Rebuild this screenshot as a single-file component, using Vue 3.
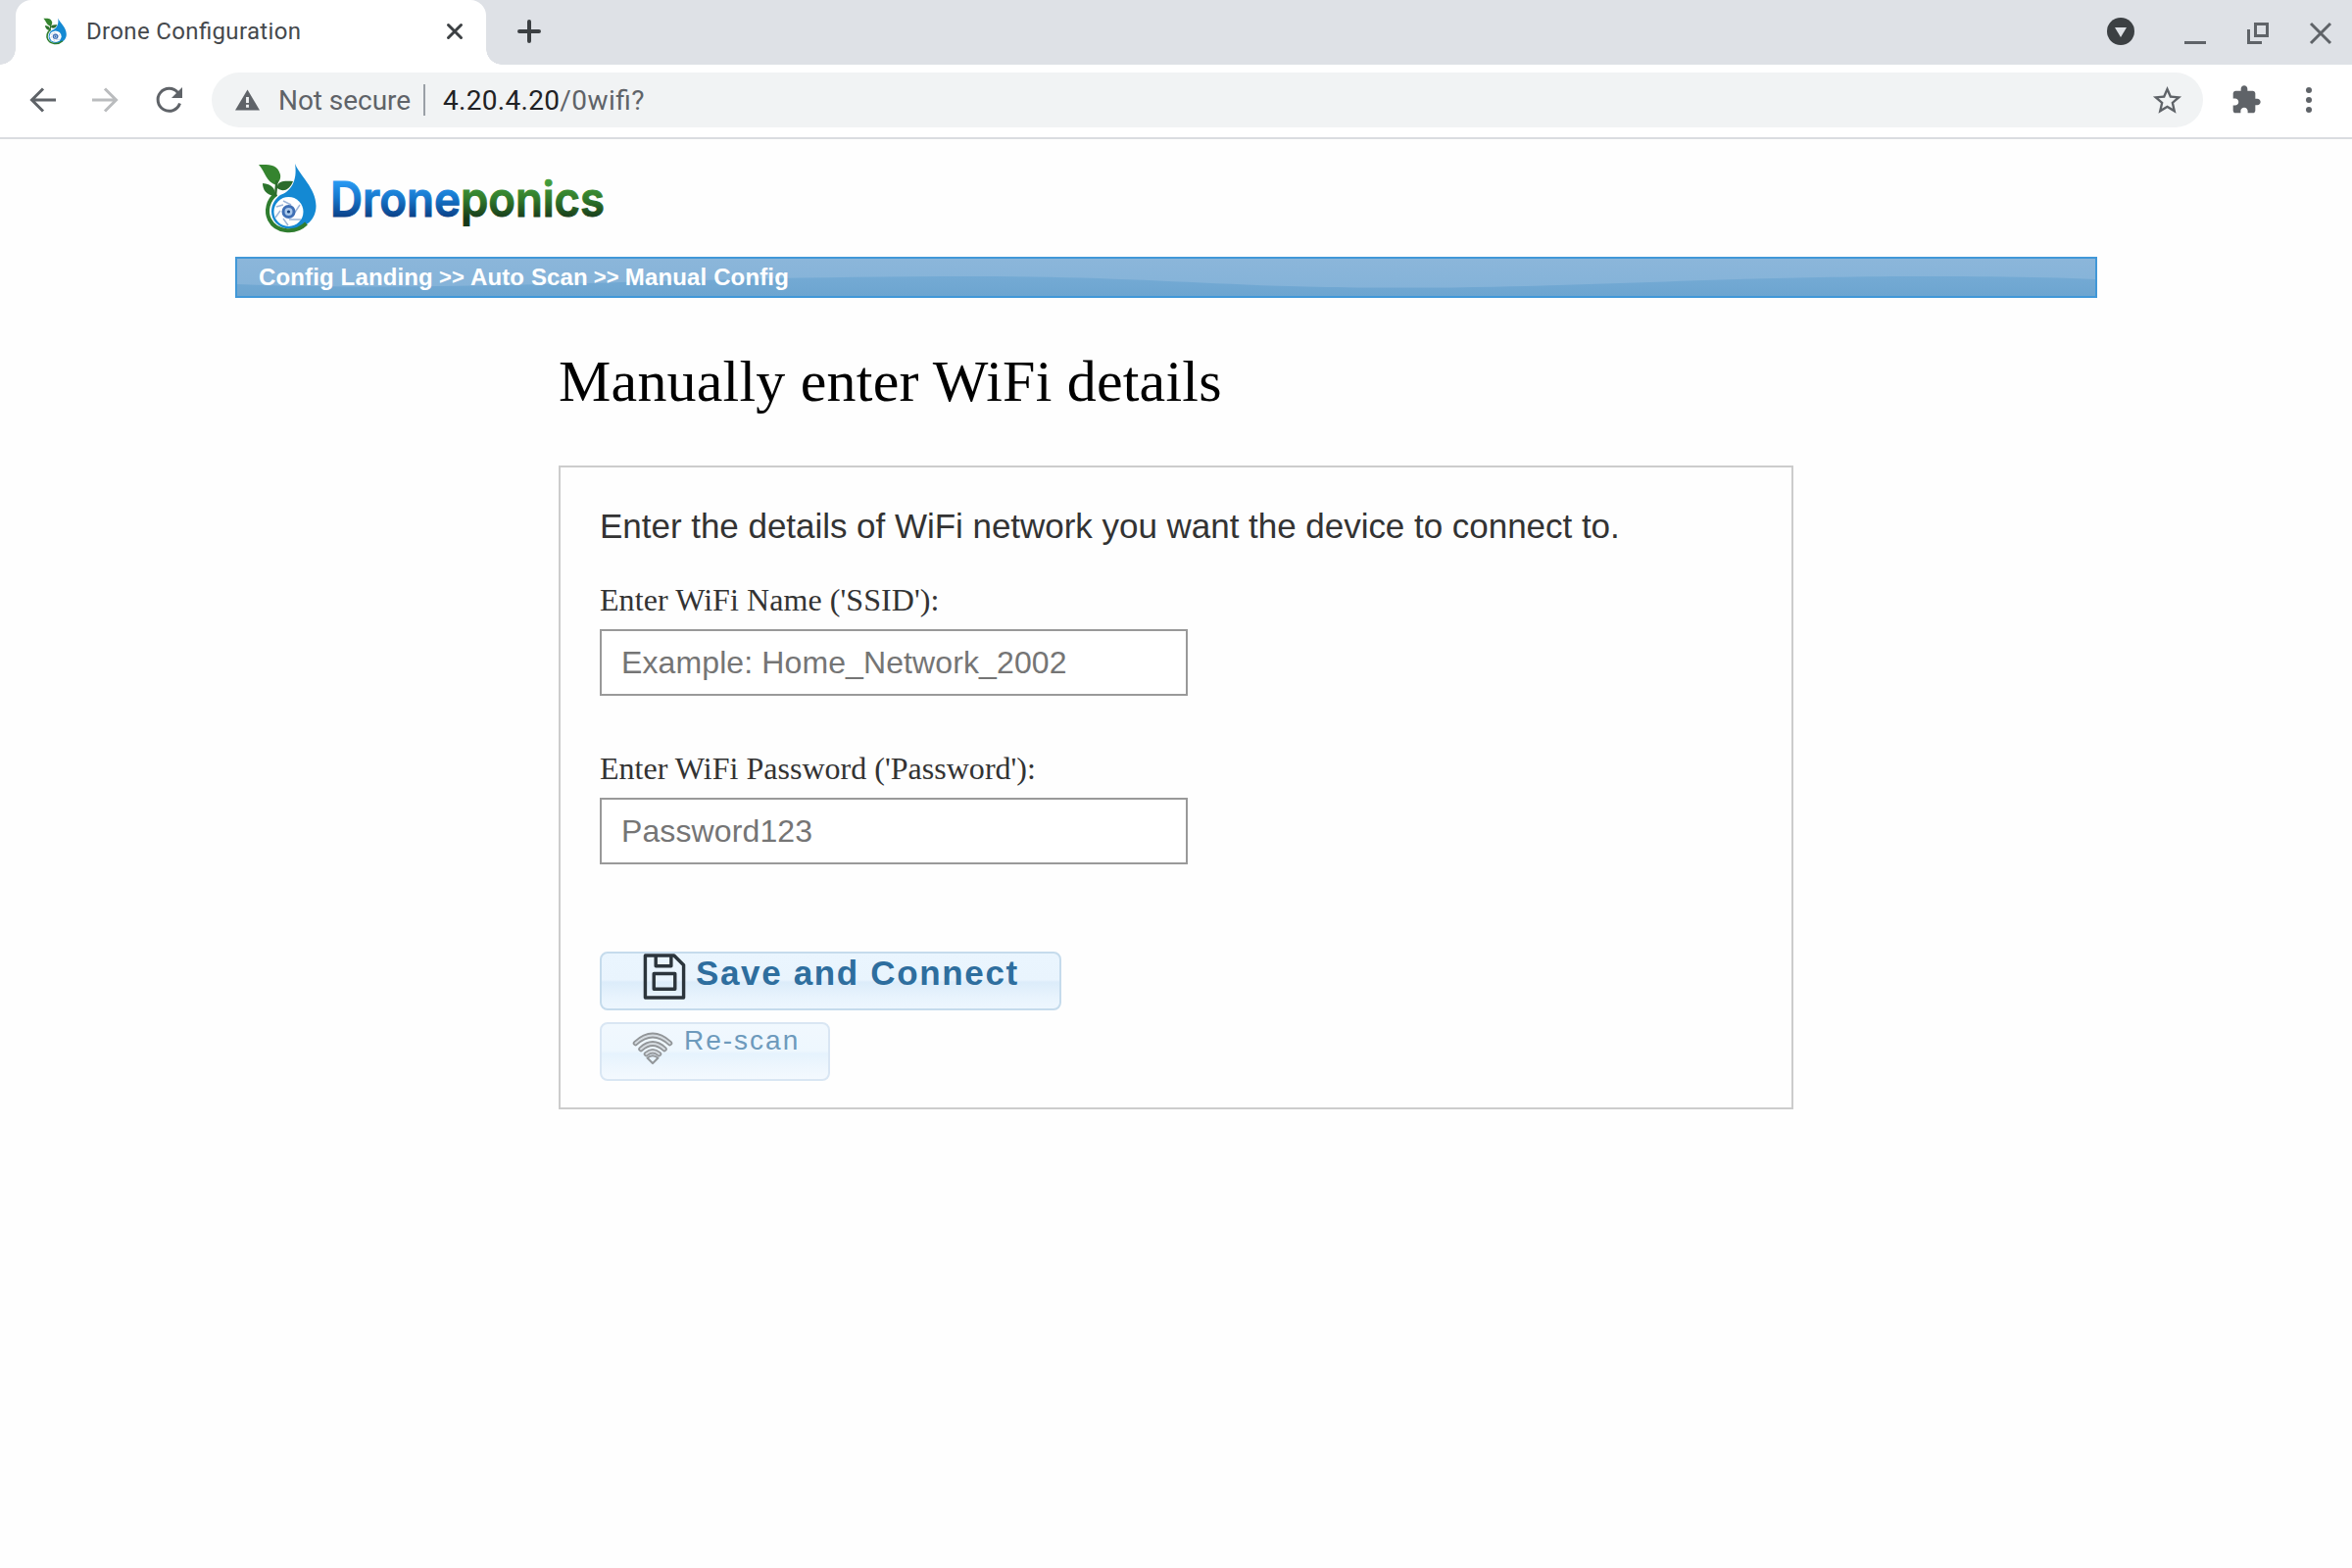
<script setup>
const crumbs = ['Config Landing', 'Auto Scan', 'Manual Config']
</script>

<template>
  <div class="window">
    <header class="strip">
      <div class="tab">
        <svg class="favicon" viewBox="43 24 60 73" preserveAspectRatio="none"><use href="#mark" /></svg>
        <span class="tab-title">Drone Configuration</span>
        <svg class="tab-close" viewBox="0 0 16 16"><path d="M1.5 1.5 14.5 14.5M14.5 1.5 1.5 14.5" /></svg>
      </div>
      <svg class="new-tab" viewBox="0 0 24 24"><path d="M12 2V22M2 12H22" /></svg>
      <div class="controls">
        <svg class="c-down" viewBox="0 0 28 28"><circle cx="14" cy="14" r="14" /><path d="M8 10h12l-6 10z" /></svg>
        <svg class="c-min" viewBox="0 0 22 22"><path d="M0 20.500H22" /></svg>
        <svg class="c-max" viewBox="0 0 22 22"><path d="M8.500 1.500H20.500V13.500H8.500zM1.500 7V20.500H15" /></svg>
        <svg class="c-close" viewBox="0 0 22 22"><path d="M1 1 21 21M21 1 1 21" /></svg>
      </div>
    </header>

    <div class="toolbar">
      <svg class="nav back" viewBox="0 0 28 28"><path d="M27 14H3M14 2.500 2.500 14 14 25.500" /></svg>
      <svg class="nav fwd" viewBox="0 0 28 28"><path d="M1 14H25M14 2.500 25.500 14 14 25.500" /></svg>
      <svg class="nav reload" viewBox="0 0 28 28"><path d="M24.500 17.500A11.500 11.500 0 1 1 22.500 6.500" /><path class="solid" d="M27 1V12H16z" /></svg>
      <div class="omnibox">
        <svg class="warn" viewBox="0 0 26 22"><path d="M13 0 26 22H0z" /><path class="bang" d="M13 8V14M13 16V19" /></svg>
        <span class="insecure">Not secure</span>
        <i class="sep"></i>
        <span class="url"><b>4.20.4.20</b>/0wifi?</span>
        <svg class="star" viewBox="0 0 24 24"><path d="M22 9.240l-7.190-.620L12 2 9.190 8.630 2 9.240l5.460 4.730L5.820 21 12 17.270 18.180 21l-1.630-7.030L22 9.240zM12 15.400l-3.760 2.270 1-4.280-3.320-2.880 4.380-.380L12 6.100l1.710 4.040 4.380.380-3.320 2.880 1 4.280L12 15.400z" /></svg>
      </div>
      <svg class="puzzle" viewBox="0 0 24 24"><path d="M20.500 11H19V7c0-1.100-.900-2-2-2h-4V3.500C13 2.120 11.880 1 10.500 1S8 2.120 8 3.500V5H4c-1.100 0-1.990.900-1.990 2v3.800H3.500c1.490 0 2.700 1.210 2.700 2.700s-1.210 2.700-2.700 2.700H2V20c0 1.100.900 2 2 2h3.800v-1.500c0-1.490 1.210-2.700 2.700-2.700 1.490 0 2.700 1.210 2.700 2.700V22H17c1.100 0 2-.900 2-2v-4h1.500c1.380 0 2.500-1.120 2.500-2.500S21.880 11 20.500 11z" /></svg>
      <svg class="dots" viewBox="0 0 6 26"><circle cx="3" cy="3" r="3" /><circle cx="3" cy="13" r="3" /><circle cx="3" cy="23" r="3" /></svg>
    </div>

    <main>
      <svg class="logo" viewBox="0 0 380 120" role="img" aria-label="Droneponics">
        <defs>
          <linearGradient id="blue" gradientUnits="userSpaceOnUse" x1="0" y1="42" x2="0" y2="80"><stop offset="0" stop-color="#2b9cf5" /><stop offset=".45" stop-color="#1779ce" /><stop offset="1" stop-color="#0a3f86" /></linearGradient>
          <linearGradient id="green" gradientUnits="userSpaceOnUse" x1="0" y1="42" x2="0" y2="88"><stop offset="0" stop-color="#46a03c" /><stop offset=".4" stop-color="#317c2c" /><stop offset=".85" stop-color="#17391a" /></linearGradient>
          <g id="mark">
            <path d="M81 25C85 36 102.500 50 102.500 68C102.500 82 92 92 76 91.500C63 91 57 82 57 74C57 66 61 61 66 57C76 54 84 43 81 25Z" fill="#1489d3" />
            <circle cx="74.500" cy="74" r="15" fill="#fff" />
            <path d="M62 56C53 62 51 74 55 82C61 94 80 98 92.500 86" fill="none" stroke="#2f7d2f" stroke-width="4" />
            <path d="M69 63 77 67M86 67 80 76M87 82 75 82M74 88 69 81M61 80 66 73M62 69 69 67" stroke="#9db6d8" stroke-width="1.500" />
            <circle cx="74.500" cy="74" r="5.500" fill="#a9c8ea" stroke="#3f6fb5" stroke-width="3" />
            <circle cx="74.500" cy="74" r="1.600" fill="#17427f" />
            <path d="M44 26C54 26 63 25 66 36C67 41 64 44 62 47C51 43 51 34 44 26Z" fill="#35842f" />
            <path d="M63 50C62 43 70 42 79 43C75 53 68 54 63 50Z" fill="#2c6b2c" />
            <path d="M60 58C52 57 48 52 48 45C57 46 62 50 60 58Z" fill="#2c742c" />
            <path d="M62.500 42 61 58" stroke="#2c6b2c" stroke-width="2.500" />
          </g>
        </defs>
        <use href="#mark" />
        <text x="117" y="79" fill="url(#blue)" stroke="url(#blue)" textLength="133" lengthAdjust="spacingAndGlyphs">Drone</text>
        <text x="250" y="79" fill="url(#green)" stroke="url(#green)" textLength="147" lengthAdjust="spacingAndGlyphs">ponics</text>
      </svg>

      <nav class="crumbs">
        <svg class="wave" viewBox="0 0 1896 38" preserveAspectRatio="none"><defs><linearGradient id="water" x1="0" y1="0" x2="0" y2="1"><stop offset="0" stop-color="#74aad4" /><stop offset="1" stop-color="#6da5d0" /></linearGradient></defs><path d="M0 26C90 29 180 29 270 27C440 23 570 18 750 18C930 18 1000 29.500 1190 29.500C1390 29.500 1500 18 1730 18C1790 18 1850 19 1896 21V38H0Z" fill="url(#water)" /></svg>
        <template v-for="(c, i) in crumbs" :key="c"><span v-if="i" class="gt">&gt;&gt;</span><a>{{ c }}</a></template>
      </nav>

      <section class="content">
        <h1>Manually enter WiFi details</h1>
        <form class="card" @submit.prevent>
          <p class="intro">Enter the details of WiFi network you want the device to connect to.</p>
          <label for="ssid">Enter WiFi Name ('SSID'):</label>
          <input id="ssid" placeholder="Example: Home_Network_2002" />
          <label for="pass" class="second">Enter WiFi Password ('Password'):</label>
          <input id="pass" placeholder="Password123" />
          <button class="save">
            <svg viewBox="0 0 44 48"><path d="M2 2H32L42 12V46H2ZM13 2H29V13H13ZM11 21H33V37H11Z" /></svg>
            <span>Save and Connect</span>
          </button>
          <button class="rescan">
            <svg viewBox="0 0 42 34">
              <g class="outer"><path d="M3.500 11.500Q21 -4.500 38.500 11.500M9 17.500Q21 6.500 33 17.500M14.500 22.500Q21 17 27.500 22.500" /></g>
              <g class="inner"><path d="M3.500 11.500Q21 -4.500 38.500 11.500M9 17.500Q21 6.500 33 17.500M14.500 22.500Q21 17 27.500 22.500" /></g>
              <path class="tip" d="M15.500 26.500Q21 22 26.500 26.500L21 32Z" />
            </svg>
            <span>Re-scan</span>
          </button>
        </form>
      </section>
    </main>
  </div>
</template>

<style>
body { margin: 0; background: #fff; }
</style>

<style scoped>
.window { width: 2400px; height: 1600px; overflow: hidden; background: #fefefe; font-family: "Liberation Sans", Arial, sans-serif; }
* { box-sizing: border-box; }
svg { display: block; flex: none; overflow: visible; }
.strip { height: 66px; background: #dee1e6; display: flex; padding-left: 16px; }
.tab { position: relative; width: 480px; height: 66px; background: #fff; border-radius: 16px 16px 0 0; display: flex; align-items: center; padding: 0 24px 2px 28px; }
.tab::before, .tab::after { content: ""; position: absolute; bottom: 0; width: 16px; height: 16px; }
.tab::before { left: -16px; background: radial-gradient(circle at 0 0, #dee1e6 15.500px, #fff 16px); }
.tab::after { right: -16px; background: radial-gradient(circle at 100% 0, #dee1e6 15.500px, #fff 16px); }
.favicon { width: 24px; height: 28px; }
.tab-title { margin-left: 20px; font: 24px Roboto, sans-serif; letter-spacing: .34px; font-feature-settings: "liga" 1; color: #45494d; width: 330px; white-space: nowrap; }
.tab-close { width: 16px; height: 16px; margin-left: auto; stroke: #3c4043; stroke-width: 3; fill: none; stroke-linecap: round; }
.new-tab { width: 24px; height: 24px; margin: 20px 0 0 32px; stroke: #3c4043; stroke-width: 4; stroke-linecap: round; }
.controls { margin-left: auto; display: flex; padding-top: 18px; }
.c-down { width: 28px; height: 28px; margin-right: 51px; fill: #3c4043; }
.c-down path { fill: #dee1e6; }
.c-min, .c-max, .c-close { width: 22px; height: 22px; margin: 5px 42px 0 0; stroke: #5f6368; stroke-width: 3; fill: none; }
.c-close { margin-right: 21px; }
.toolbar { height: 76px; border-bottom: 2px solid #dadce0; background: #fff; display: flex; align-items: center; padding-bottom: 2px; }
.nav { width: 28px; height: 28px; stroke: #5f6368; stroke-width: 3; fill: none; }
.back { margin-left: 30px; }
.fwd { margin-left: 35px; stroke: #babcbe; }
.reload { margin-left: 38px; }
.solid { fill: #5f6368; stroke: none; }
.omnibox { margin-left: 29px; width: 2032px; height: 56px; border-radius: 28px; background: #f1f3f4; display: flex; align-items: center; padding: 0 19px 0 24px; font: 28px Roboto, sans-serif; color: #5f6368; }
.warn { width: 25px; height: 22px; fill: #5f6368; }
.bang { stroke: #f1f3f4; stroke-width: 3; }
.insecure { margin-left: 19px; width: 135px; white-space: nowrap; letter-spacing: -.05px; }
.sep { width: 2px; height: 32px; background: #9aa0a6; margin: 0 18px 0 13px; }
.url { letter-spacing: .45px; font-feature-settings: "liga" 1; }
.url b { font-weight: 400; color: #202124; letter-spacing: .3px; }
.star { width: 35px; height: 35px; margin-left: auto; fill: #5f6368; }
.puzzle { width: 32px; height: 32px; margin-left: 28px; fill: #5f6368; }
.dots { width: 6px; height: 26px; margin-left: 45px; fill: #5f6368; }
main { padding-left: 240px; }
.logo { width: 380px; height: 120px; margin-left: -20px; }
.logo { font: 600 49px Inter, sans-serif; }
.logo text { stroke-width: 1; }
.crumbs { position: relative; width: 1900px; height: 42px; border: 2px solid #4198d8; background: linear-gradient(#8bb6da, #83b2d8); display: flex; align-items: center; padding: 0 0 1px 22px; color: #fff; font-size: 24px; letter-spacing: .14px; font-weight: 700; white-space: nowrap; }
.crumbs > a, .crumbs > .gt { position: relative; }
.gt { margin: 0 6px; font-size: 22px; }
.wave { position: absolute; left: 0; top: 0; width: 1896px; height: 38px; }
.content { width: 1260px; margin-left: 330px; }
h1 { margin: 0; padding-top: 50px; height: 171px; font: 400 60px/70px "Liberation Serif", serif; letter-spacing: .2px; color: #000; white-space: nowrap; }
.card { border: 2px solid #ccc; height: 657px; padding: 40px; color: #333; display: flex; flex-direction: column; align-items: flex-start; }
.card > * { flex: none; }
.intro { margin: 0; height: 79px; font-size: 35px; line-height: 40px; letter-spacing: -.03px; white-space: nowrap; }
label { font: 32px/32px "Liberation Serif", serif; height: 46px; letter-spacing: .07px; white-space: nowrap; }
.second { margin-top: 58px; letter-spacing: .02px; }
input { width: 600px; height: 68px; border: 2px solid #999; border-radius: 0; padding: 0 20px; font: 32px "Liberation Sans", Arial, sans-serif; letter-spacing: .11px; background: #fff; outline: 0; }
input::placeholder { color: #757575; opacity: 1; }
button { display: flex; align-items: flex-start; height: 60px; border-radius: 8px; padding: 0; font-family: "Liberation Sans", Arial, sans-serif; white-space: nowrap; }
.save { width: 471px; margin-top: 89px; border: 2px solid #c5dbec; background: linear-gradient(#eaf5fe 0, #e9f4fd 48%, #dcecfa 52%, #e9f4fd 82%, #edf6fe 100%); color: #2e6e9e; font-size: 35px; font-weight: 700; letter-spacing: 1.65px; line-height: 40px; }
.save svg { width: 44px; height: 47px; margin: 0 0 0 42px; stroke: #2c353c; stroke-width: 3.500; stroke-linejoin: round; fill: none; }
.save span { margin-left: 10px; }
.rescan { width: 235px; margin-top: 12px; border: 2px solid #d9e6f3; background: linear-gradient(#f1f8fe 0, #eef7fe 48%, #e6f3fd 54%, #f4f9fe 100%); color: #6d9abc; font-size: 28px; letter-spacing: 2px; line-height: 33px; }
.rescan svg { width: 42px; height: 34px; margin: 8px 0 0 31px; fill: none; stroke-linecap: round; }
.outer { stroke: #929699; stroke-width: 5.500; }
.inner { stroke: #d5dbe0; stroke-width: 2; }
.tip { stroke: #929699; stroke-width: 2; stroke-linejoin: round; }
.rescan span { margin-left: 11px; }
</style>
